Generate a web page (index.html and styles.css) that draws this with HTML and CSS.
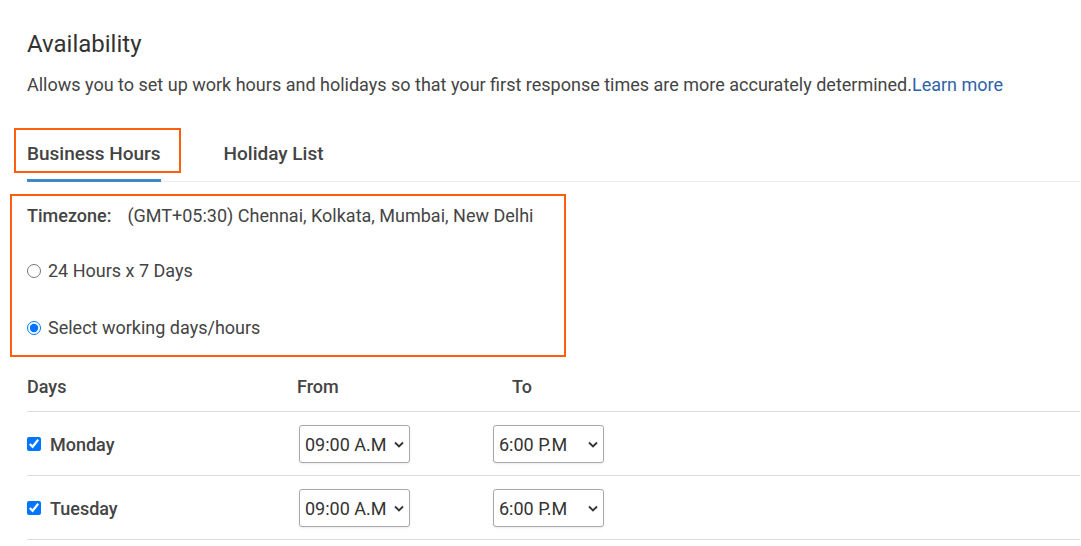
FILE: index.html
```html
<!DOCTYPE html>
<html lang="en">
<head>
<meta charset="utf-8">
<title>Availability</title>
<link rel="stylesheet" href="styles.css">
</head>
<body>
<div class="page">
  <h1 class="title">Availability</h1>
  <p class="desc">Allows you to set up work hours and holidays so that your first response times are more accurately determined.<a class="link" href="#">Learn more</a></p>

  <div class="tabs">
    <div class="tab tab-active">Business Hours</div>
    <div class="tab">Holiday List</div>
  </div>

  <div class="settings">
    <div class="tz-row">
      <span class="tz-label">Timezone:</span>
      <span class="tz-value">(GMT+05:30) Chennai, Kolkata, Mumbai, New Delhi</span>
    </div>
    <label class="radio-row radio-first"><input type="radio" name="mode" class="radio"><span>24 Hours x 7 Days</span></label>
    <label class="radio-row radio-second"><input type="radio" name="mode" class="radio" checked><span>Select working days/hours</span></label>
  </div>

  <div class="table">
    <div class="row head">
      <div class="cell">Days</div>
      <div class="cell">From</div>
      <div class="cell cell-to">To</div>
    </div>
    <div class="row">
      <label class="cell day"><input type="checkbox" class="check" checked><span>Monday</span></label>
      <div class="cell"><select class="time time-from"><option>09:00 A.M</option></select></div>
      <div class="cell"><select class="time"><option>6:00 P.M</option></select></div>
    </div>
    <div class="row">
      <label class="cell day"><input type="checkbox" class="check" checked><span>Tuesday</span></label>
      <div class="cell"><select class="time time-from"><option>09:00 A.M</option></select></div>
      <div class="cell"><select class="time"><option>6:00 P.M</option></select></div>
    </div>
  </div>
</div>
</body>
</html>
```

FILE: styles.css
```css
* { box-sizing: border-box; }

body {
  margin: 0;
  background: #fff;
  font-family: Roboto, "Noto Sans", "Liberation Sans", sans-serif;
  color: #333;
}

.page {
  padding: 30px 1px 0 27px;
}

.title {
  margin: 0;
  font-size: 24px;
  font-weight: 400;
  line-height: 28px;
  color: #333;
}

.desc {
  margin: 15px 0 0;
  font-size: 18px;
  line-height: 24px;
  color: #444;
}

.link {
  color: #2f62a8;
  text-decoration: none;
}

.tabs {
  display: flex;
  gap: 63px;
  margin-top: 45px;
  border-bottom: 1px solid #e6ecf2;
}

.tab {
  position: relative;
  font-size: 19px;
  font-weight: 500;
  line-height: 24px;
  padding-bottom: 13px;
  color: #444;
  border-bottom: 3px solid transparent;
  margin-bottom: -1px;
}

.tab-active {
  border-bottom-color: #3f87c9;
}

.tab-active::before {
  content: "";
  position: absolute;
  left: -13px;
  right: -20px;
  top: -14px;
  bottom: 6px;
  border: 2px solid #ff5e0e;
}

.settings {
  margin: 12px 0 0 -17px;
  width: 556px;
  border: 2px solid #ff5e0e;
  padding: 8px 0 15px 15px;
  font-size: 18px;
  line-height: 24px;
  color: #444;
}

.tz-row {
  display: flex;
  gap: 16px;
}

.tz-label {
  font-weight: 500;
}

.radio-row {
  display: flex;
  align-items: center;
  gap: 7px;
}

.radio-first {
  margin-top: 31px;
}

.radio-second {
  margin-top: 33px;
}

.radio {
  margin: 0;
  width: 14px;
  height: 14px;
}

.table {
  margin-top: 18px;
  font-size: 18px;
  color: #444;
}

.row {
  display: grid;
  grid-template-columns: 270px 196px 1fr;
  align-items: center;
  border-bottom: 1px solid #dedede;
  padding: 13px 0 12px;
}

.row.head {
  padding: 0 0 12px;
  font-weight: 500;
  line-height: 24px;
}

.cell-to {
  padding-left: 19px;
}

.day {
  display: flex;
  align-items: center;
  gap: 9px;
  font-weight: 500;
}

.check {
  margin: 0;
  width: 14px;
  height: 14px;
}

.time {
  appearance: none;
  -webkit-appearance: none;
  width: 111px;
  height: 38px;
  border: 1px solid #a8a8a8;
  border-radius: 3px;
  background: #fff url("data:image/svg+xml,%3Csvg xmlns='http://www.w3.org/2000/svg' width='10' height='7' viewBox='0 0 10 7'%3E%3Cpath d='M1 1.5l4 4 4-4' fill='none' stroke='%23333' stroke-width='1.8'/%3E%3C/svg%3E") no-repeat right 5px center;
  padding: 0 18px 0 5px;
  font-family: Roboto, "Noto Sans", sans-serif;
  font-size: 18px;
  color: #333;
  box-shadow: 0 1px 2px rgba(0,0,0,0.08);
}

.time-from {
  margin-left: 2px;
}
```
